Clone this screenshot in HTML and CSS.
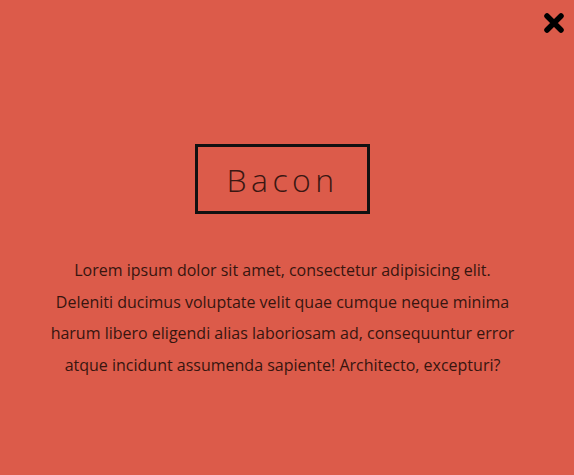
FILE: index.html
```html
<!DOCTYPE html>
<html>
<head>
<meta charset="utf-8">
<link rel="stylesheet" href="styles.css">
</head>
<body>
<div class="overlay">
  <button class="close" aria-label="Close">
    <svg width="22" height="22" viewBox="0 0 22 22"><path d="M4 4 L18 18 M18 4 L4 18" stroke="#000" stroke-width="5.5" stroke-linecap="round"/></svg>
  </button>
  <div class="content">
    <h1 class="title">Bacon</h1>
    <p class="text">Lorem ipsum dolor sit amet, consectetur adipisicing elit. Deleniti ducimus voluptate velit quae cumque neque minima harum libero eligendi alias laboriosam ad, consequuntur error atque incidunt assumenda sapiente! Architecto, excepturi?</p>
  </div>
</div>
</body>
</html>
```
FILE: styles.css
```css
html, body {
  margin: 0;
  padding: 0;
  height: 100%;
}
body {
  background: #dc5b4a;
  font-family: "Open Sans", sans-serif;
}
.overlay {
  position: relative;
  box-sizing: border-box;
  height: 100%;
  padding-right: 9px;
  display: flex;
  flex-direction: column;
  align-items: center;
}
.close {
  position: absolute;
  top: 12px;
  right: 9px;
  width: 22px;
  height: 22px;
  padding: 0;
  border: 0;
  background: none;
  cursor: pointer;
}
.close svg { display: block; }
.content {
  display: flex;
  flex-direction: column;
  align-items: center;
  padding-top: 144px;
}
.title {
  margin: 0;
  box-sizing: border-box;
  width: 175px;
  height: 70px;
  border: 3px solid #111;
  display: flex;
  align-items: center;
  justify-content: center;
  font-weight: 300;
  font-size: 32px;
  letter-spacing: 4.4px;
  color: #3a1712;
}
.text {
  margin: 41px 0 0;
  width: 472px;
  text-align: center;
  font-size: 16px;
  line-height: 31.7px;
  color: #37150f;
}
```
